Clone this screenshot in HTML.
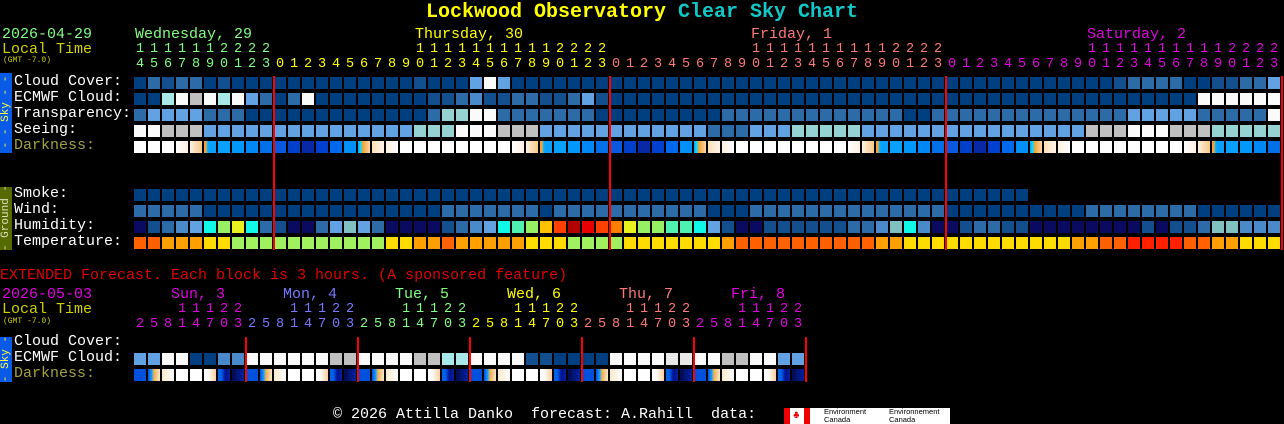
<!DOCTYPE html>
<html><head><meta charset="utf-8"><style>
body{margin:0;background:#000;width:1284px;height:424px;overflow:hidden;position:relative;font-family:"Liberation Mono",monospace}
.t{position:absolute;white-space:pre;font-size:15px;line-height:14px}
.b{position:absolute;width:12px;height:12px}
.d{position:absolute;font-size:13.5px;line-height:14px;white-space:pre}
.r{position:absolute;background:#f00;width:2px}
</style></head><body>
<div class="t" style="left:0;width:1284px;text-align:center;top:2px;font-size:20px;line-height:22px;font-weight:bold;color:#ffff00">Lockwood Observatory <span style="color:#10c8c8">Clear Sky Chart</span></div>
<div class="t" style="left:2px;top:28px;color:#80ff80">2026-04-29</div>
<div class="t" style="left:2px;top:43px;color:#d0d000">Local Time</div>
<div class="t" style="left:3px;top:56px;color:#d0d000;font-size:8px;line-height:9px">(GMT -7.0)</div>
<div class="t" style="left:14px;top:75px;color:#fff">Cloud Cover:</div>
<div class="t" style="left:14px;top:91px;color:#fff">ECMWF Cloud:</div>
<div class="t" style="left:14px;top:107px;color:#fff">Transparency:</div>
<div class="t" style="left:14px;top:123px;color:#fff">Seeing:</div>
<div class="t" style="left:14px;top:139px;color:#a0a040">Darkness:</div>
<div class="t" style="left:14px;top:187px;color:#fff">Smoke:</div>
<div class="t" style="left:14px;top:203px;color:#fff">Wind:</div>
<div class="t" style="left:14px;top:219px;color:#fff">Humidity:</div>
<div class="t" style="left:14px;top:235px;color:#fff">Temperature:</div>
<div style="position:absolute;left:0;top:73px;width:12px;height:80px;background:#0a5ae8"></div>
<div class="t" style="left:-34px;top:106px;width:80px;text-align:center;font-size:11px;line-height:12px;color:#ffff40;transform:rotate(-90deg)">- - Sky - -</div>
<div style="position:absolute;left:0;top:187px;width:12px;height:63px;background:#556b00"></div>
<div class="t" style="left:-34px;top:212px;width:80px;text-align:center;font-size:11px;line-height:12px;color:#e0e0c0;transform:rotate(-90deg)">- Ground -</div>
<div class="t" style="left:0;top:269px;color:#e00000">EXTENDED Forecast. Each block is 3 hours. (A sponsored feature)</div>
<div class="t" style="left:2px;top:288px;color:#e000e0">2026-05-03</div>
<div class="t" style="left:2px;top:303px;color:#d0d000">Local Time</div>
<div class="t" style="left:3px;top:317px;color:#d0d000;font-size:8px;line-height:9px">(GMT -7.0)</div>
<div class="t" style="left:14px;top:335px;color:#fff">Cloud Cover:</div>
<div class="t" style="left:14px;top:351px;color:#fff">ECMWF Cloud:</div>
<div class="t" style="left:14px;top:367px;color:#a0a040">Darkness:</div>
<div style="position:absolute;left:0;top:337px;width:12px;height:45px;background:#0a5ae8"></div>
<div class="t" style="left:-34px;top:353px;width:80px;text-align:center;font-size:11px;line-height:12px;color:#ffff40;transform:rotate(-90deg)">- Sky -</div>
<div class="t" style="left:333px;top:408px;color:#fff">© 2026 Attilla Danko  forecast: A.Rahill  data:</div>
<div style="position:absolute;left:784px;top:408px;width:166px;height:16px;background:#fff"></div>
<div style="position:absolute;left:784px;top:408px;width:6px;height:16px;background:#e00"></div>
<div style="position:absolute;left:804px;top:408px;width:6px;height:16px;background:#e00"></div>
<div style="position:absolute;left:793px;top:411px;color:#e00;font-size:11px;line-height:11px">♣</div>
<div style="position:absolute;left:824px;top:408px;font-family:'Liberation Sans',sans-serif;font-size:7.5px;line-height:8px;color:#000">Environment<br>Canada</div>
<div style="position:absolute;left:889px;top:408px;font-family:'Liberation Sans',sans-serif;font-size:7.5px;line-height:8px;color:#000">Environnement<br>Canada</div>
<div id="g"></div>
<script>
var C={a:'#003f7f',b:'#134f8f',c:'#2d6aa8',d:'#4a8acb',e:'#62a2e2',f:'#62a2e2',w:'#fafafa',g:'#c0c0c0',t:'#a8e8e8',q:'#96d2d2',x:'#e8e8e8'};
var H={n:'#0a0a60',b:'#134f8f',c:'#2d6aa8',d:'#4a8acb',e:'#62a2e2',y:'#10f8e8',m:'#50f0b0',G:'#96f064',Y:'#e8f020',O:'#ffc000',R:'#ff4000',K:'#b00000',E:'#e80000',P:'#ff8000',T:'#80c0c0'};
var TC={o:'#ff6000',A:'#ffa000',y:'#ffdc00',g:'#a0f060',r:'#ff2000'};
function r(c,n){return c.repeat(n)}
var CC="acbccabaaa"+r('a',9)+"abaaaewea"+r('a',42)+"bccccaabbcce";
var EC="aatwgwtwecacwa"+"aaaaa"+"aabbcdbbccbbceb"+r('a',42)+r('w',6);
var TR="ceeeecccaa"+r('a',9)+"aacqqwwccccccca"+r('a',8)+r('c',13)+"aa"+r('c',14)+r('e',5)+r('c',5)+"w";
var SE="wwggg"+r('f',15)+"qqqwwwggg"+r('f',12)+"cccfff"+r('q',5)+r('f',16)+"gggwwwggg"+r('q',5);
var WI=r('c',5)+r('a',17)+r('c',7)+"a"+r('c',11)+"aaa"+r('c',14)+r('a',10)+r('c',8)+r('a',6);
var HU="nbcdeyGYycbnnceTecn"+"nnnbcdeymGORKERPYGGmmyebnnbbbbb"+"bccdTydnnbccbbnnnnnnnnbnbbcTTddd";
var TE="ooAAAyy"+r('g',11)+"yyAAoAAAAAyyygggg"+r('y',7)+"A"+r('o',7)+"oooAA"+r('y',12)+"AAoorrrrooAAyyy";
var o='';
function blk(x,y,bg){o+='<div class="b" style="left:'+x+'px;top:'+y+'px;background:'+bg+'"></div>';}
function dk(h){
 if(h>=9&&h<=16)return'#fff';
 var m={16:'#fff',17:'linear-gradient(90deg,#fff,#fdf0e0)',18:'linear-gradient(90deg,#fdf0e0,#f8c888)',8:'linear-gradient(90deg,#fdf0e0,#fff)',7:'linear-gradient(90deg,#fde0b8,#fdf4ea)',6:'linear-gradient(90deg,#0aa0ff 0,#10e0ff 25%,#f8a030 40%,#fcd8a8)',
 19:'linear-gradient(90deg,#f8a030 0,#f8a030 20%,#10c0ff 25%,#0aa0ff 40%)',20:'#0aa0ff',21:'#0098fc',22:'#0088f4',23:'#0070e8',0:'#0858e0',1:'#0040c8',2:'#0828a8',3:'#0040d0',4:'#0068ec',5:'#0090f8'};return m[h];}
for(var k=0;k<82;k++){
 var x=134+14*k,h=(14+k)%24;
 blk(x,77,C[CC[k]]);blk(x,93,C[EC[k]]);blk(x,109,C[TR[k]]);blk(x,125,C[SE[k]]);blk(x,141,dk(h));
 if(k<64)blk(x,189,C.a);
 blk(x,205,C[WI[k]]);blk(x,221,H[HU[k]]);blk(x,237,TC[TE[k]]);
 var col=k<10?'#80ff80':k<34?'#ffff00':k<58?'#ff7878':'#e000e0';
 o+='<div class="d" style="left:'+(x+2)+'px;top:58px;color:'+col+'">'+(h%10)+'</div>';
 if(h>=10)o+='<div class="d" style="left:'+(x+2)+'px;top:43px;color:'+col+'">'+Math.floor(h/10)+'</div>';
}
var days=[[0,'Wednesday, 29','#80ff80'],[20,'Thursday, 30','#ffff00'],[44,'Friday, 1','#ff7878'],[68,'Saturday, 2','#e000e0']];
days.forEach(function(d){o+='<div class="t" style="left:'+(135+14*d[0])+'px;top:28px;color:'+d[2]+'">'+d[1]+'</div>';});
[273,609,945,1281].forEach(function(x){o+='<div class="r" style="left:'+x+'px;top:76px;height:174px"></div>';});
var XE="eewwaaddwwwwwwggwwwwggttwwwwbbaaaawwwwxxwwggwwee";
var xd=['#0050e0','linear-gradient(90deg,#0050e0 0,#10a0ff 30%,#f8b050 50%,#fde8cc)','linear-gradient(90deg,#fde8cc,#fff)','#fff','#fff','linear-gradient(90deg,#fff 30%,#f8d0a0)','linear-gradient(90deg,#0060e8 0,#0060e8 30%,#001090 60%,#0020a0)','linear-gradient(90deg,#000a50,#0020a0)'];
var ed=[['Sun, 3','#e000e0'],['Mon, 4','#7878ff'],['Tue, 5','#80ff80'],['Wed, 6','#ffff00'],['Thu, 7','#ff7878'],['Fri, 8','#e000e0']];
var hrs=[2,5,8,11,14,17,20,23];
for(var j=0;j<48;j++){
 var x=134+14*j,dd=Math.floor(j/8),hh=hrs[j%8],cl=ed[dd][1];
 blk(x,353,C[XE[j]]);blk(x,369,xd[j%8]);
 o+='<div class="d" style="left:'+(x+2)+'px;top:318px;color:'+cl+'">'+(hh%10)+'</div>';
 if(hh>=10)o+='<div class="d" style="left:'+(x+2)+'px;top:303px;color:'+cl+'">'+Math.floor(hh/10)+'</div>';
}
ed.forEach(function(d,i){o+='<div class="t" style="left:'+(171+112*i)+'px;top:288px;color:'+d[1]+'">'+d[0]+'</div>';});
for(var i=1;i<=6;i++)o+='<div class="r" style="left:'+(133+112*i)+'px;top:337px;height:45px"></div>';
document.getElementById('g').innerHTML=o;
</script>
</body></html>
